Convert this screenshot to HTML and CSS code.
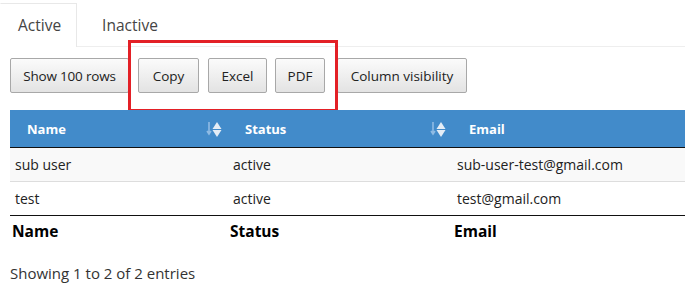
FILE: index.html
```html
<!DOCTYPE html>
<html lang="en">
  <head>
    <meta charset="UTF-8" />
    <meta name="viewport" content="width=device-width, initial-scale=1.0" />
    <title>Users</title>
    <link rel="stylesheet" href="styles.css">
  </head>
  <body>
    <main>
      <ul class="tabs">
        <li class="tab active">Active</li>
        <li class="tab">Inactive</li>
      </ul>

      <div class="toolbar">
        <button class="dt-button btn-rows">Show 100 rows</button>
        <button class="dt-button btn-copy">Copy</button>
        <button class="dt-button btn-excel">Excel</button>
        <button class="dt-button btn-pdf">PDF</button>
        <button class="dt-button btn-colvis">Column visibility</button>
      </div>

      <!-- red frame drawn over the export buttons -->
      <div class="highlight"></div>

      <table class="users">
        <colgroup>
          <col class="col-name">
          <col class="col-status">
          <col>
        </colgroup>
        <thead>
          <tr>
            <th>Name <span class="sort"><svg width="16" height="18" viewBox="0 0 16 18"><path d="M3 2v11M1 11l2 3 2-3" stroke="#8fbbe4" stroke-width="1.6" fill="none"/><path d="M11 2l4.5 7h-9z" fill="#e4edf6"/><path d="M11 17l4.5-7h-9z" fill="#e4edf6"/></svg></span></th>
            <th>Status <span class="sort"><svg width="16" height="18" viewBox="0 0 16 18"><path d="M3 2v11M1 11l2 3 2-3" stroke="#8fbbe4" stroke-width="1.6" fill="none"/><path d="M11 2l4.5 7h-9z" fill="#e4edf6"/><path d="M11 17l4.5-7h-9z" fill="#e4edf6"/></svg></span></th>
            <th>Email</th>
          </tr>
        </thead>
        <tbody>
          <tr class="odd">
            <td>sub user</td>
            <td>active</td>
            <td>sub-user-test@gmail.com</td>
          </tr>
          <tr>
            <td>test</td>
            <td>active</td>
            <td>test@gmail.com</td>
          </tr>
        </tbody>
        <tfoot>
          <tr>
            <th>Name</th>
            <th>Status</th>
            <th>Email</th>
          </tr>
        </tfoot>
      </table>

      <div class="info">Showing 1 to 2 of 2 entries</div>
    </main>
  </body>
</html>
```

FILE: styles.css
```css
body {
  font-family: "Open Sans", Arial, sans-serif;
  color: #222;
  background-color: #fff;
  margin: 0;
  padding: 0;
  overflow: hidden;
}

main {
  width: 700px;
  padding-top: 3px;
  position: relative;
}

.tabs {
  display: flex;
  list-style: none;
  margin: 0;
  padding: 0;
  border-bottom: 1px solid #eeeeee;
}

.tab {
  padding: 0 17px 0 17px;
  height: 42px;
  line-height: 42px;
  font-size: 15.5px;
  color: #444;
  border: 1px solid transparent;
  border-bottom: none;
  margin-bottom: -1px;
}

.tab.active {
  background-color: #fff;
  border-color: #e8e8e8;
  border-left-color: transparent;
  height: 43px;
  padding-right: 15px;
  margin-right: 7px;
}

.toolbar {
  display: flex;
  align-items: center;
  gap: 9px;
  margin: 11px 0 0 10px;
  height: 35px;
}

.highlight {
  position: absolute;
  left: 128px;
  top: 40px;
  width: 210px;
  height: 72px;
  border: 3px solid #e32026;
  box-sizing: border-box;
}

.dt-button {
  font-family: inherit;
  font-size: 13.5px;
  color: #222;
  height: 35px;
  padding: 0;
  text-align: center;
  border: 1px solid #a8a8a8;
  border-radius: 2px;
  background: linear-gradient(to bottom, #fbfbfb 0%, #e3e3e3 100%);
  cursor: pointer;
}

.btn-rows { width: 119px; letter-spacing: -0.2px; }
.btn-copy { width: 61px; }
.btn-excel { width: 59px; }
.btn-pdf { width: 50px; margin-left: -1px; }
.btn-colvis { width: 130px; margin-left: 3px; }

.users {
  width: 700px;
  margin: 17px 0 0 10px;
  border-collapse: collapse;
  font-size: 14px;
  table-layout: fixed;
}

.col-name { width: 218px; }
.col-status { width: 224px; }

.users thead th {
  background-color: #428bca;
  color: #fff;
  font-size: 13px;
  font-weight: bold;
  text-align: left;
  height: 37px;
  padding: 0 0 0 17px;
  border-bottom: 1px solid #111;
  position: relative;
}

.sort {
  position: absolute;
  right: 6px;
  top: 10px;
  height: 18px;
}

.users td {
  height: 33px;
  padding: 0 0 0 5px;
  border-top: 1px solid #ddd;
}

.users tbody tr:first-child td {
  border-top: none;
}

.users tbody tr.odd td {
  background-color: #f9f9f9;
}

.users tfoot th {
  text-align: left;
  font-size: 15.5px;
  font-weight: bold;
  color: #000;
  height: 29px;
  padding: 0 0 0 2px;
  border-top: 1px solid #111;
}

.info {
  margin: 18px 0 0 10px;
  font-size: 15px;
  color: #333;
}
```
